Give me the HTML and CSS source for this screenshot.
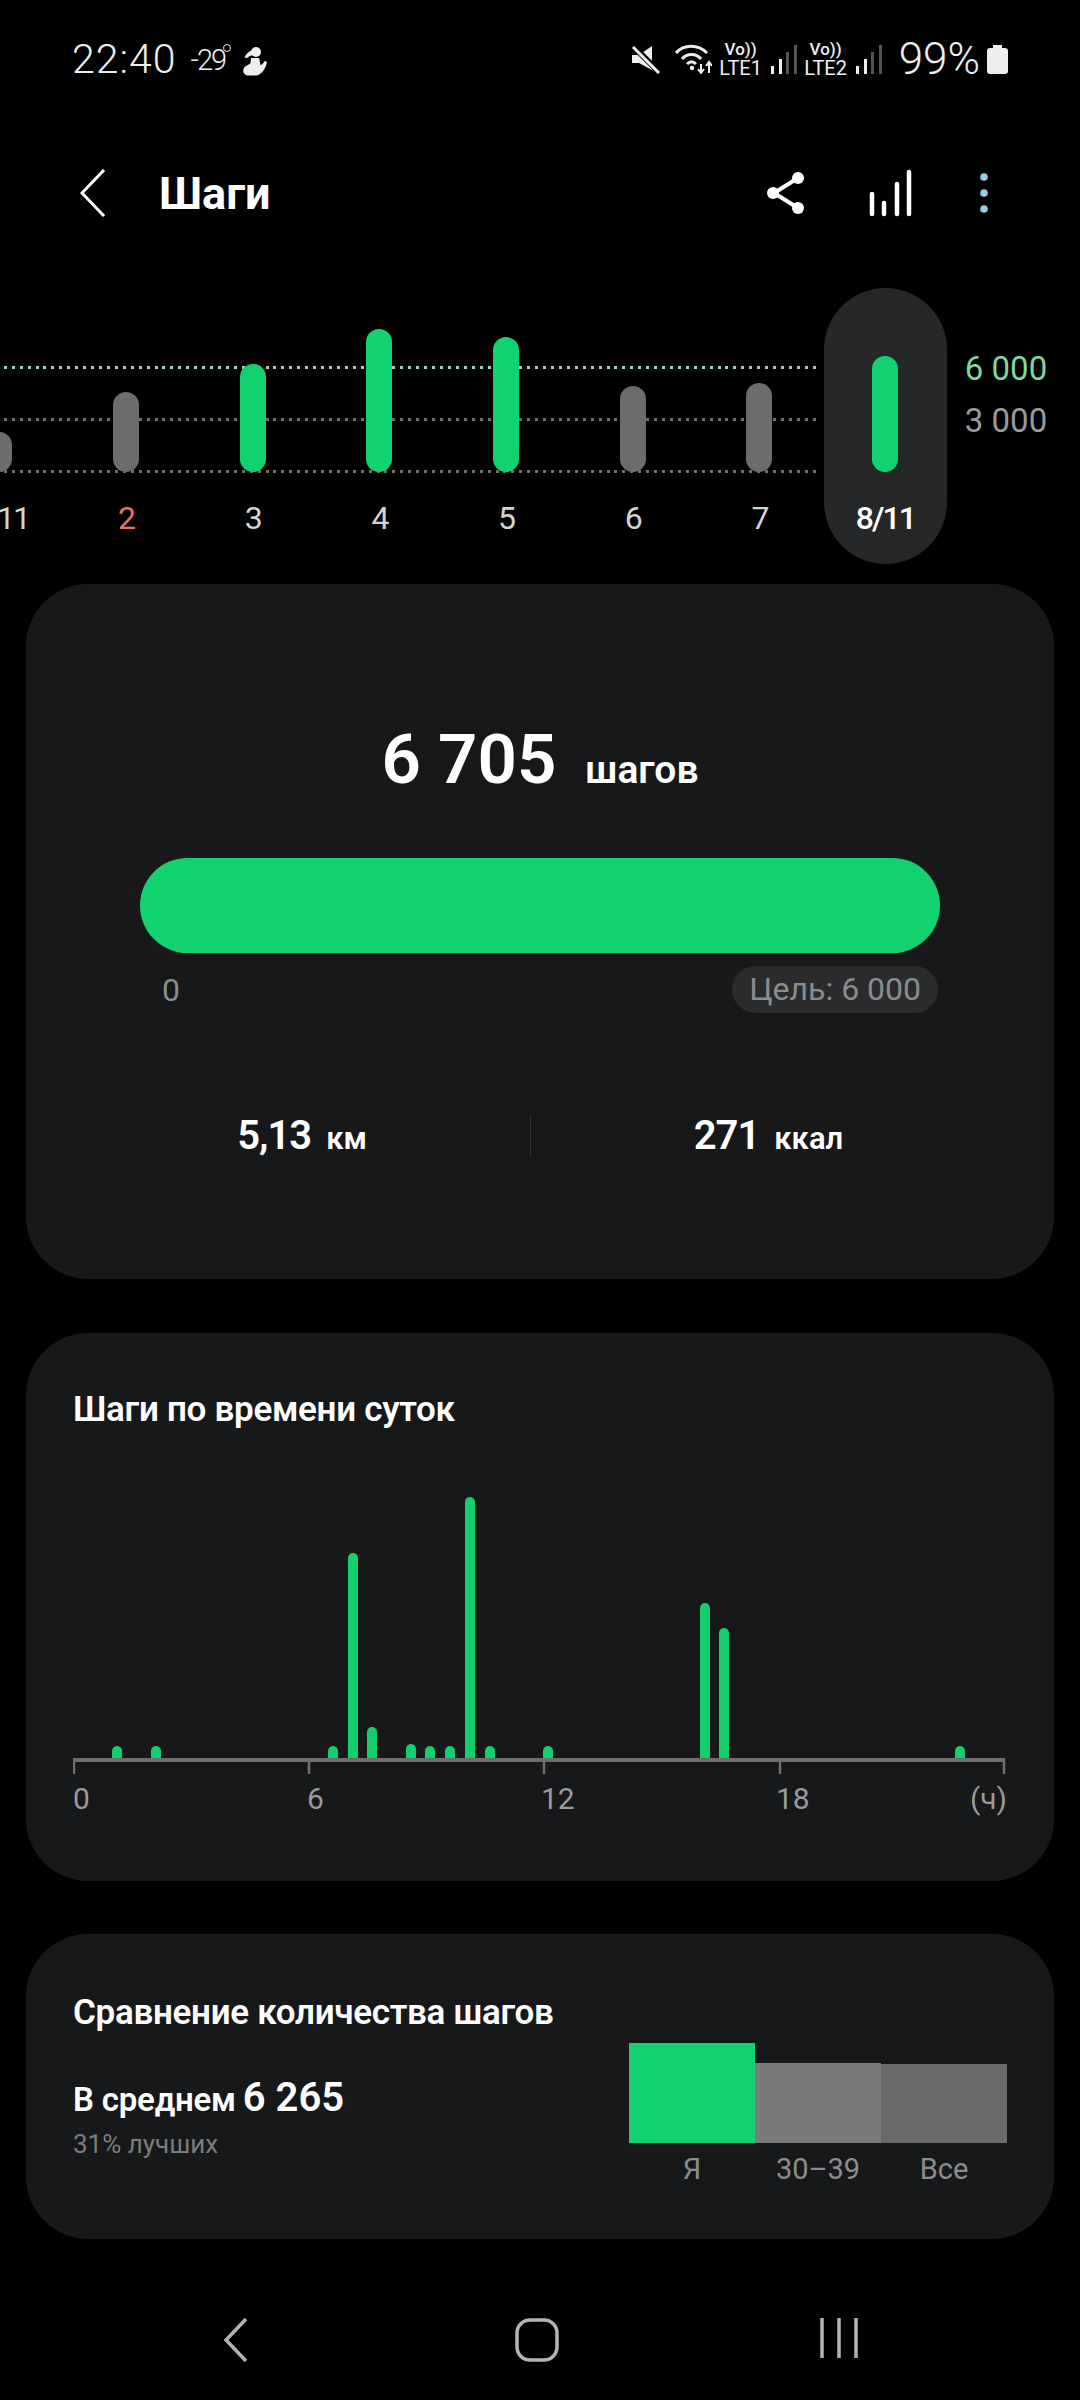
FILE: index.html
```html
<!DOCTYPE html>
<html lang="ru">
<head>
    <meta charset="UTF-8">
    <meta name="viewport" content="width=device-width, initial-scale=1.0">
    <title>Шаги</title>
    <link rel="stylesheet" href="styles.css">
</head>
<body>
    <div class="status">
        <div class="status-left">
            <span class="clock">22:40</span>
            <span class="temp">-29</span>
            <span class="degree"></span>
            <svg class="runner" viewBox="0 0 26 29"><circle cx="14" cy="5" r="5" fill="#eee"/><path d="M11 3 C7 4 4 7 2.5 10.5 L5 11 C7 9 10 8 12 8Z" fill="#eee"/><path d="M9 11 L17 11 C18 14 18 16 18.5 18 C20 18 21.5 16 22.5 14 L25 15 C24 21 20 27 15 28.5 L5 28.5 C2 27 0 25 2 21 C4 18 7 18 8.5 16 Z" fill="#eee"/></svg>
        </div>
        <div class="status-right">
            <svg class="mute" viewBox="0 0 30 29"><path d="M1 10 H8 L21 1 V25 L8 18 H1 Z" fill="#eee"/><path d="M1 0 L29 28" stroke="#000" stroke-width="6"/><path d="M2 2 L28 28" stroke="#eee" stroke-width="3"/></svg>
            <svg class="wifi" viewBox="0 0 38 30"><g fill="none" stroke="#eee" stroke-width="3"><path d="M2 9 C10 0 24 0 33 9"/><path d="M8 15 C13 9 22 9 27 15"/><path d="M13 20 C16 17 19 17 22 20"/></g><circle cx="18" cy="24" r="2.2" fill="#eee"/><path d="M27 20 V29 M24 25 L27 29 L30 25 M35 29 V19 M32 22 L35 18 L38 22" fill="none" stroke="#eee" stroke-width="2"/></svg>
            <div class="net"><span class="vo">Vo))</span><span class="lte">LTE1</span></div>
            <svg class="signal" viewBox="0 0 26 29"><rect x="0" y="21" width="3" height="8" fill="#eee"/><rect x="8" y="14" width="3" height="15" fill="#eee"/><rect x="15" y="7" width="3" height="22" fill="#555"/><rect x="23" y="0" width="3" height="29" fill="#555"/></svg>
            <div class="net"><span class="vo">Vo))</span><span class="lte">LTE2</span></div>
            <svg class="signal" viewBox="0 0 26 29"><rect x="0" y="21" width="3" height="8" fill="#eee"/><rect x="8" y="14" width="3" height="15" fill="#eee"/><rect x="15" y="7" width="3" height="22" fill="#555"/><rect x="23" y="0" width="3" height="29" fill="#555"/></svg>
            <span class="battery-text">99%</span>
            <svg class="battery" viewBox="0 0 21 29"><path d="M6 0 H15 V3 H18 Q21 3 21 6 V26 Q21 29 18 29 H3 Q0 29 0 26 V6 Q0 3 3 3 H6Z" fill="#eee"/></svg>
        </div>
    </div>

    <div class="appbar">
        <svg class="back" viewBox="0 0 26 48"><path d="M24 1 L2 24 L24 47" fill="none" stroke="#fff" stroke-width="3"/></svg>
        <h1 class="title">Шаги</h1>
        <div class="actions">
            <svg class="share" viewBox="0 0 40 42"><path d="M31 6 L7 21 L31 36" fill="none" stroke="#fff" stroke-width="4"/><circle cx="31" cy="6" r="6" fill="#fff"/><circle cx="6" cy="21" r="6" fill="#fff"/><circle cx="31" cy="36" r="6" fill="#fff"/></svg>
            <svg class="trend" viewBox="0 0 44 48"><g fill="none" stroke="#fff" stroke-width="4.5" stroke-linecap="round"><path d="M3 45 V25"/><path d="M15 45 V34"/><path d="M28 45 V15"/><path d="M40 45 V3"/></g></svg>
            <svg class="dots" viewBox="0 0 8 40"><circle cx="4" cy="4" r="3.8" fill="#9ccdea"/><circle cx="4" cy="20" r="3.8" fill="#9ccdea"/><circle cx="4" cy="36" r="3.8" fill="#9ccdea"/></svg>
        </div>
    </div>

    <div class="week">
        <div class="week-lines">
            <div class="line line-goal"></div>
            <div class="line"></div>
            <div class="line"></div>
        </div>
        <div class="day"><div class="plot"><div class="bar gray" style="height: 40px"></div></div><span class="day-label">1/11</span></div>
        <div class="day"><div class="plot"><div class="bar gray" style="height: 80px"></div></div><span class="day-label red">2</span></div>
        <div class="day"><div class="plot"><div class="bar green" style="height: 108px"></div></div><span class="day-label">3</span></div>
        <div class="day"><div class="plot"><div class="bar green" style="height: 143px"></div></div><span class="day-label">4</span></div>
        <div class="day"><div class="plot"><div class="bar green" style="height: 135px"></div></div><span class="day-label">5</span></div>
        <div class="day"><div class="plot"><div class="bar gray" style="height: 86px"></div></div><span class="day-label">6</span></div>
        <div class="day"><div class="plot"><div class="bar gray" style="height: 89px"></div></div><span class="day-label">7</span></div>
        <div class="day selected"><div class="plot"><div class="bar green" style="height: 116px"></div></div><span class="day-label">8/11</span></div>
        <div class="scale">
            <span class="scale-goal">6 000</span>
            <span class="scale-mid">3 000</span>
        </div>
    </div>

    <section class="card card-main">
        <div class="total"><span class="total-num">6 705</span><span class="total-unit">шагов</span></div>
        <div class="progress"></div>
        <div class="progress-labels">
            <span class="zero">0</span>
            <span class="goal">Цель: 6 000</span>
        </div>
        <div class="stats">
            <div class="stat stat-left"><span class="stat-num">5,13</span><span class="stat-unit">км</span></div>
            <div class="stat stat-right"><span class="stat-num">271</span><span class="stat-unit">ккал</span></div>
        </div>
    </section>

    <section class="card card-hours">
        <h2 class="card-title">Шаги по времени суток</h2>
        <svg class="hours" viewBox="0 0 933 290">
            <g fill="#12cf6e">
                <path d="M39 268 V259 a5 5 0 0 1 10 0 V268Z"/>
                <path d="M78 268 V259 a5 5 0 0 1 10 0 V268Z"/>
                <path d="M255 268 V259 a5 5 0 0 1 10 0 V268Z"/>
                <path d="M275 268 V66 a5 5 0 0 1 10 0 V268Z"/>
                <path d="M294 268 V240 a5 5 0 0 1 10 0 V268Z"/>
                <path d="M333 268 V257 a5 5 0 0 1 10 0 V268Z"/>
                <path d="M352 268 V259 a5 5 0 0 1 10 0 V268Z"/>
                <path d="M372 268 V259 a5 5 0 0 1 10 0 V268Z"/>
                <path d="M392 268 V10 a5 5 0 0 1 10 0 V268Z"/>
                <path d="M412 268 V259 a5 5 0 0 1 10 0 V268Z"/>
                <path d="M470 268 V259 a5 5 0 0 1 10 0 V268Z"/>
                <path d="M627 268 V116 a5 5 0 0 1 10 0 V268Z"/>
                <path d="M646 268 V141 a5 5 0 0 1 10 0 V268Z"/>
                <path d="M882 268 V259 a5 5 0 0 1 10 0 V268Z"/>
            </g>
            <g fill="none" stroke="#6e6e6e">
                <path d="M1 268 H932" stroke-width="4"/>
                <path d="M1 266 V282 M236 266 V282 M471 266 V282 M707 266 V282 M931 266 V282" stroke-width="2.5"/>
            </g>
        </svg>
        <div class="hour-labels">
            <span>0</span><span>6</span><span>12</span><span>18</span><span class="hour-unit">(ч)</span>
        </div>
    </section>

    <section class="card card-compare">
        <h2 class="card-title">Сравнение количества шагов</h2>
        <div class="compare">
            <div class="avg">
                <div class="avg-line"><span class="avg-text">В среднем</span><span class="avg-num">6 265</span></div>
                <div class="avg-sub">31% лучших</div>
            </div>
            <div class="cols">
                <div class="col"><div class="plot-col"><div class="col-bar me" style="height: 100px"></div></div><span class="col-label">Я</span></div>
                <div class="col"><div class="plot-col"><div class="col-bar age" style="height: 80px"></div></div><span class="col-label">30–39</span></div>
                <div class="col"><div class="plot-col"><div class="col-bar all" style="height: 79px"></div></div><span class="col-label">Все</span></div>
            </div>
        </div>
    </section>

    <div class="navbar">
        <svg class="nav-back" viewBox="0 0 25 44"><path d="M23 1 L3 22 L23 43" fill="none" stroke="#b4b4b4" stroke-width="3.5"/></svg>
        <svg class="nav-home" viewBox="0 0 44 44"><rect x="2" y="2" width="40" height="40" rx="13" fill="none" stroke="#b4b4b4" stroke-width="3.5"/></svg>
        <svg class="nav-recent" viewBox="0 0 38 40"><path d="M2 0 V40 M19 0 V40 M36 0 V40" fill="none" stroke="#b4b4b4" stroke-width="3.5"/></svg>
    </div>
</body>
</html>
```

FILE: styles.css
```css
* {
    box-sizing: border-box;
}
html, body {
    margin: 0;
    padding: 0;
}
body {
    width: 1080px;
    height: 2400px;
    overflow: hidden;
    background-color: #000;
    color: #fff;
    font-family: Roboto, sans-serif;
}

/* status bar */
.status {
    height: 145px;
    padding: 41px 72px 0 72px;
    display: flex;
    justify-content: space-between;
    align-items: flex-start;
    color: #eee;
}
.status-left,
.status-right {
    display: flex;
    align-items: center;
    height: 36px;
}
.clock {
    font-size: 41px;
    font-weight: 300;
    line-height: 36px;
    letter-spacing: 1px;
}
.temp {
    font-size: 29px;
    font-weight: 300;
    line-height: 36px;
    margin-left: 14px;
    margin-top: 2px;
    letter-spacing: -2px;
}
.degree {
    width: 8px;
    height: 8px;
    border: 1.5px solid #eee;
    border-radius: 50%;
    margin: -22px 0 0 -2px;
}
.runner {
    width: 26px;
    height: 29px;
    margin-left: 11px;
    margin-top: 4px;
}
.mute {
    width: 30px;
    height: 29px;
}
.wifi {
    width: 38px;
    height: 30px;
    margin-left: 13px;
}
.net {
    display: flex;
    flex-direction: column;
    align-items: center;
    color: #eee;
    margin-left: 9px;
    width: 40px;
}
.vo {
    font-size: 17px;
    font-weight: 500;
    line-height: 17px;
}
.lte {
    font-size: 20px;
    line-height: 20px;
}
.signal {
    width: 26px;
    height: 29px;
    margin-left: 10px;
}
.battery-text {
    font-size: 44px;
    font-weight: 300;
    line-height: 36px;
    margin-left: 17px;
}
.battery {
    width: 21px;
    height: 29px;
    margin-left: 7px;
}

/* app bar */
.appbar {
    height: 96px;
    margin-bottom: 47px;
    padding: 0 92px 0 80px;
    display: flex;
    align-items: center;
}
.back {
    width: 26px;
    height: 48px;
}
.title {
    margin: 0 0 0 53px;
    font-size: 45px;
    font-weight: 700;
    flex: 1;
}
.actions {
    display: flex;
    align-items: center;
}
.share {
    width: 40px;
    height: 42px;
}
.trend {
    width: 44px;
    height: 48px;
    margin-left: 62px;
}
.dots {
    width: 8px;
    height: 40px;
    margin-left: 67px;
}

/* week chart */
.week {
    position: relative;
    height: 296px;
    margin-left: -64px;
    display: flex;
}
.week-lines {
    position: absolute;
    left: 0;
    top: 78px;
    width: 885px;
}
.line {
    height: 52px;
    background-image: repeating-linear-gradient(90deg, transparent 0 4.4px, #6f6f6f 4.4px 7.4px, transparent 7.4px 7.93px);
    background-size: 100% 3px;
    background-repeat: no-repeat;
}
.line-goal {
    background-image: repeating-linear-gradient(90deg, transparent 0 4.4px, #9ad8b6 4.4px 7.4px, transparent 7.4px 7.93px);
}
.day {
    width: 126.7px;
    height: 276px;
    flex: none;
    position: relative;
    display: flex;
    flex-direction: column;
    align-items: center;
}
.plot {
    height: 184px;
    display: flex;
    align-items: flex-end;
}
.bar {
    width: 26px;
    border-radius: 13px;
}
.green {
    background-color: #12d26f;
}
.gray {
    background-color: #6c6c6c;
}
.day-label {
    margin-top: 27px;
    font-size: 32px;
    line-height: 38px;
    letter-spacing: -2px;
    color: #d4d4d4;
}
.red {
    color: #e8716c;
}
.selected {
    background-color: #262729;
    border-radius: 62px;
    width: 123px;
    margin-left: 1px;
}
.selected .day-label {
    color: #fff;
    font-weight: 500;
}
.scale {
    margin-left: 18px;
    margin-top: 55px;
    display: flex;
    flex-direction: column;
    font-size: 33px;
    line-height: 52px;
}
.scale-goal {
    color: #7fd6a0;
}
.scale-mid {
    color: #9a9a9a;
}

/* cards */
.card {
    width: 1028px;
    margin: 0 0 0 26px;
    background-color: #17181a;
    border-radius: 62px;
}
.card-main {
    height: 695px;
    padding: 135px 114px 0 114px;
}
.card-hours {
    height: 548px;
    margin-top: 54px;
    padding: 55px 47px 0 47px;
}
.card-compare {
    height: 305px;
    margin-top: 53px;
    padding: 57px 47px 0 47px;
}
.card-title {
    margin: 0;
    font-size: 35px;
    line-height: 44px;
    font-weight: 600;
    letter-spacing: -0.3px;
}

.total {
    display: flex;
    height: 82px;
    justify-content: center;
    align-items: baseline;
    line-height: 82px;
}
.total-num {
    font-size: 69px;
    font-weight: 600;
}
.total-unit {
    margin-left: 29px;
    font-size: 39px;
    font-weight: 600;
}
.progress {
    height: 95px;
    margin-top: 57px;
    background-color: #12d26f;
    border-radius: 48px;
}
.progress-labels {
    display: flex;
    justify-content: space-between;
    align-items: center;
    margin-top: 13px;
    padding: 0 2px 0 22px;
    color: #8c8c8c;
    font-size: 32px;
}
.goal {
    background-color: #2a2b2d;
    height: 47px;
    line-height: 47px;
    padding: 0 17px;
    border-radius: 24px;
}
.stats {
    display: flex;
    margin: 103px -66px 0 -66px;
    height: 40px;
    align-items: center;
}
.stat {
    height: 40px;
    display: flex;
    justify-content: center;
    align-items: baseline;
    line-height: 40px;
}
.stat-left {
    width: 456px;
}
.stat-right {
    width: 476px;
    border-left: 1px solid #333;
}
.stat-num {
    font-size: 40px;
    font-weight: 600;
    letter-spacing: -1px;
}
.stat-unit {
    margin-left: 15px;
    font-size: 31px;
    font-weight: 600;
}

.hours {
    display: block;
    width: 933px;
    height: 290px;
    margin-top: 60px;
}
.hour-labels {
    display: grid;
    grid-template-columns: 234px 234px 235px 1fr auto;
    margin-top: -1px;
    font-size: 30px;
    line-height: 36px;
    color: #9a9a9a;
}

.compare {
    display: flex;
    justify-content: space-between;
}
.avg {
    padding-top: 39px;
}
.avg-line {
    display: flex;
    align-items: baseline;
}
.avg-text {
    font-size: 33px;
    font-weight: 600;
    letter-spacing: -0.2px;
}
.avg-num {
    margin-left: 7px;
    font-size: 40px;
    font-weight: 600;
}
.avg-sub {
    margin-top: 8px;
    font-size: 26px;
    color: #7c7c7c;
}
.cols {
    display: flex;
    margin-top: 8px;
}
.col {
    width: 126px;
    display: flex;
    flex-direction: column;
    align-items: center;
}
.plot-col {
    width: 100%;
    height: 100px;
    display: flex;
    align-items: flex-end;
}
.col-bar {
    width: 100%;
}
.me {
    background-color: #12d26f;
}
.age {
    background-color: #7a7a7a;
}
.all {
    background-color: #6a6a6a;
}
.col-label {
    margin-top: 8px;
    font-size: 29px;
    line-height: 36px;
    color: #8c8c8c;
}

/* nav bar */
.navbar {
    position: absolute;
    left: 0;
    right: 0;
    top: 2318px;
    height: 44px;
}
.nav-back,
.nav-home,
.nav-recent {
    position: absolute;
    top: 0;
}
.nav-back {
    left: 223px;
    width: 25px;
    height: 44px;
}
.nav-home {
    left: 515px;
    width: 44px;
    height: 44px;
}
.nav-recent {
    left: 820px;
    width: 38px;
    height: 40px;
}
```
